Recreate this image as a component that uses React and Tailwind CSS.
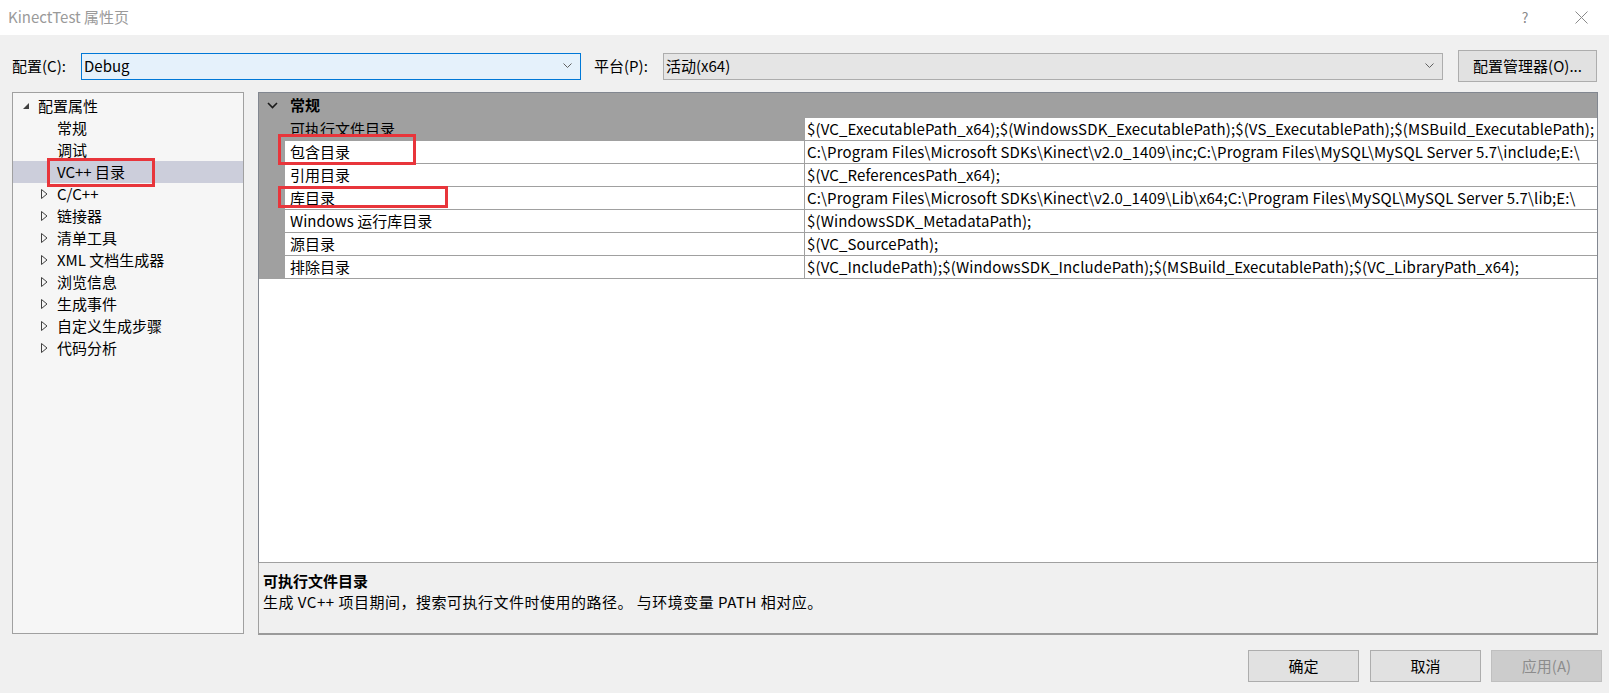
import React from "react";

const treeItems = [
  { label: "配置属性", level: 0, arrow: "open" },
  { label: "常规", level: 1 },
  { label: "调试", level: 1 },
  { label: "VC++ 目录", level: 1, selected: true },
  { label: "C/C++", level: 1, arrow: "closed" },
  { label: "链接器", level: 1, arrow: "closed" },
  { label: "清单工具", level: 1, arrow: "closed" },
  { label: "XML 文档生成器", level: 1, arrow: "closed" },
  { label: "浏览信息", level: 1, arrow: "closed" },
  { label: "生成事件", level: 1, arrow: "closed" },
  { label: "自定义生成步骤", level: 1, arrow: "closed" },
  { label: "代码分析", level: 1, arrow: "closed" },
];

const rows = [
  {
    name: "可执行文件目录",
    value: "$(VC_ExecutablePath_x64);$(WindowsSDK_ExecutablePath);$(VS_ExecutablePath);$(MSBuild_ExecutablePath);",
  },
  {
    name: "包含目录",
    value:
      "C:\\Program Files\\Microsoft SDKs\\Kinect\\v2.0_1409\\inc;C:\\Program Files\\MySQL\\MySQL Server 5.7\\include;E:\\",
  },
  { name: "引用目录", value: "$(VC_ReferencesPath_x64);" },
  {
    name: "库目录",
    value: "C:\\Program Files\\Microsoft SDKs\\Kinect\\v2.0_1409\\Lib\\x64;C:\\Program Files\\MySQL\\MySQL Server 5.7\\lib;E:\\",
  },
  { name: "Windows 运行库目录", value: "$(WindowsSDK_MetadataPath);" },
  { name: "源目录", value: "$(VC_SourcePath);" },
  {
    name: "排除目录",
    value: "$(VC_IncludePath);$(WindowsSDK_IncludePath);$(MSBuild_ExecutablePath);$(VC_LibraryPath_x64);",
  },
];

function Chevron() {
  return (
    <svg width="9" height="6" viewBox="0 0 9 6">
      <polyline points="0.5,0.5 4.5,4.5 8.5,0.5" fill="none" stroke="#606060" strokeWidth="1" />
    </svg>
  );
}

function TreeArrow({ type }) {
  if (type === "open") {
    return (
      <svg width="8" height="8" viewBox="0 0 8 8">
        <polygon points="7,1 7,7 1,7" fill="#404040" />
      </svg>
    );
  }
  return (
    <svg width="7" height="10" viewBox="0 0 7 10">
      <polygon points="0.5,0.5 6,5 0.5,9.5" fill="none" stroke="#404040" strokeWidth="1" />
    </svg>
  );
}

export default function App() {
  return (
    <div className="w-[1609px] h-[693px] overflow-hidden bg-[#f0f0f0] text-black text-[15px] font-['Noto_Sans_CJK_SC',sans-serif] flex flex-col">
      {/* Title bar */}
      <div className="h-[35px] bg-white flex items-center justify-between">
        <span className="pl-[8px] text-[#9a9a9a]">KinectTest 属性页</span>
        <div className="flex items-center pr-[5px] gap-[10px]">
          <span className="w-[46px] text-center text-[#8a8a8a] text-[14px]">?</span>
          <div className="w-[46px] flex justify-center">
            <svg width="13" height="13" viewBox="0 0 13 13">
              <line x1="0.5" y1="0.5" x2="12.5" y2="12.5" stroke="#8a8a8a" strokeWidth="1" />
              <line x1="12.5" y1="0.5" x2="0.5" y2="12.5" stroke="#8a8a8a" strokeWidth="1" />
            </svg>
          </div>
        </div>
      </div>

      {/* Configuration row */}
      <div className="h-[57px] pt-[5px] flex items-center pl-[12px]">
        <span className="w-[69px]">配置(C):</span>
        <div className="w-[500px] h-[27px] bg-[#e5f1fb] border border-[#0078d7] flex items-center justify-between pl-[2px] pr-[8px]">
          <span>Debug</span>
          <Chevron />
        </div>
        <span className="w-[82px] pl-[13px]">平台(P):</span>
        <div className="w-[780px] h-[27px] bg-[#e5e5e5] border border-[#adadad] flex items-center justify-between pl-[2px] pr-[8px]">
          <span>活动(x64)</span>
          <Chevron />
        </div>
        <button className="ml-[15px] w-[139px] h-[32px] bg-[#e1e1e1] border border-[#adadad]">
          配置管理器(O)...
        </button>
      </div>

      {/* Main area */}
      <div className="h-[543px] flex pl-[12px]">
        {/* Tree */}
        <div className="relative w-[232px] h-[542px] bg-[#f6f6f6] border border-[#a0a0a0] pt-[2px]">
          {treeItems.map((it) => (
            <div
              key={it.label}
              className={`flex items-center h-[22px] ${it.level === 0 ? "pl-[9px]" : "pl-[28px]"} ${
                it.selected ? "bg-[#cccedb]" : ""
              }`}
            >
              <div className="w-[16px] flex items-center">{it.arrow && <TreeArrow type={it.arrow} />}</div>
              <span className="whitespace-nowrap">{it.label}</span>
            </div>
          ))}
          <div className="absolute left-[34px] top-[65px] w-[108px] h-[29px] border-[3px] border-[#e8353b]" />
        </div>

        {/* Right side */}
        <div className="ml-[14px] w-[1340px] flex flex-col">
          <div className="relative h-[471px] bg-white border border-[#828790] border-b-[#a0a0a0] overflow-hidden">
            <div className="flex items-center h-[25px] bg-[#a0a0a0]">
              <div className="w-[26px] flex justify-center">
                <svg width="11" height="7" viewBox="0 0 11 7">
                  <polyline points="1,1 5.5,5.5 10,1" fill="none" stroke="#1a1a1a" strokeWidth="1.6" />
                </svg>
              </div>
              <span className="ml-[5px] font-bold">常规</span>
            </div>
            {rows.map((r, i) => (
              <div key={r.name} className="flex h-[23px]">
                <div className="w-[26px] bg-[#a0a0a0]" />
                <div
                  className={`w-[520px] shrink-0 border-b border-r border-[#a0a0a0] pl-[5px] flex items-center whitespace-nowrap ${
                    i === 0 ? "bg-[#a0a0a0]" : ""
                  }`}
                >
                  {r.name}
                </div>
                <div className="flex-1 min-w-0 border-b border-[#a0a0a0] pl-[2px] flex items-center whitespace-nowrap overflow-hidden tracking-[0.13px]">
                  {r.value}
                </div>
              </div>
            ))}
            <div className="absolute left-[19px] top-[41px] w-[138px] h-[31px] border-[3px] border-[#e8353b]" />
            <div className="absolute left-[19px] top-[93px] w-[170px] h-[22px] border-[3px] border-[#e8353b]" />
          </div>
          <div className="h-[72px] border-l border-r border-[#a0a0a0] border-b-2 border-b-[#9a9a9a] px-[4px] pt-[8px]">
            <div className="font-bold leading-[20px]">可执行文件目录</div>
            <div className="leading-[21px] tracking-[0.5px]">
              生成 VC++ 项目期间，搜索可执行文件时使用的路径。 与环境变量 PATH 相对应。
            </div>
          </div>
        </div>
      </div>

      {/* Bottom buttons */}
      <div className="flex justify-end pt-[15px] pr-[7px]">
        <button className="w-[111px] h-[32px] bg-[#e1e1e1] border border-[#adadad]">确定</button>
        <button className="ml-[11px] w-[111px] h-[32px] bg-[#e1e1e1] border border-[#adadad]">取消</button>
        <button className="ml-[10px] w-[111px] h-[32px] bg-[#cccccc] border border-[#bfbfbf] text-[#8c8c8c]">
          应用(A)
        </button>
      </div>
    </div>
  );
}
